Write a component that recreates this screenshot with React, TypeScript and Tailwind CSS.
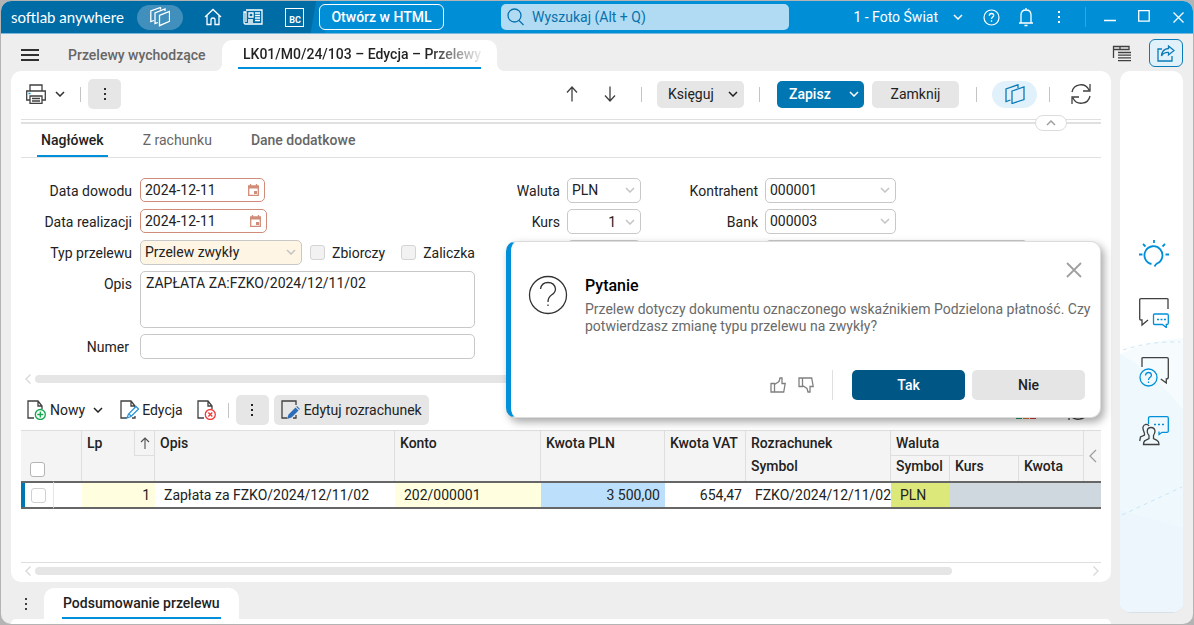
import { useState } from 'react'
import type { ReactNode } from 'react'
import clsx from 'clsx'

const ASIDE_LINE = '#404040'
const BLUE = '#0090d9'

function Icon({ w = 20, h = 20, className = '', children }: { w?: number; h?: number; className?: string; children: ReactNode }) {
  return (
    <svg
      width={w}
      height={h}
      viewBox={`0 0 ${w} ${h}`}
      fill="none"
      stroke="currentColor"
      strokeWidth="1.3"
      aria-hidden="true"
      className={clsx('shrink-0', className)}
    >
      {children}
    </svg>
  )
}

function Chevron({ className = '' }: { className?: string }) {
  return (
    <Icon w={10} h={6} className={className}>
      <path d="M1 1l4 4 4-4" strokeWidth="1.5" />
    </Icon>
  )
}

function Dots({ className = '' }: { className?: string }) {
  return (
    <Icon w={4} h={14} className={className}>
      <path d="M1 1h2v2H1zM1 6h2v2H1zM1 11h2v2H1z" fill="currentColor" stroke="none" />
    </Icon>
  )
}

function Refresh() {
  return (
    <Icon w={22} h={22} className="text-[#404040]">
      <path d="M2 9a9 9 0 0 1 17-2M20 1v7h-7M20 13a9 9 0 0 1-17 2M2 21v-7h7" />
    </Icon>
  )
}

function DocBase() {
  return <path d="M7 18H1V1h10l4 5v3M11 1v5h4" stroke="#404040" />
}

function Divider({ className = '' }: { className?: string }) {
  return <span className={clsx('h-[15px] w-px shrink-0 bg-[#c4c4c4]', className)} />
}

function TitleBar() {
  return (
    <header className="flex h-[33px] shrink-0 items-center border-b border-[#79b8dc] bg-[linear-gradient(100deg,#006ca6_0%,#006ca6_310px,#0080c4_311px,#0080c4_324px,#008fd7_325px)] pr-[9px] pl-[10px] text-white">
      <span className="w-[126px] font-[Lato,sans-serif] text-[15px] whitespace-nowrap">softlab anywhere</span>
      <button aria-label="Moduły" className="flex h-[25px] w-[46px] items-center justify-center rounded-full bg-[#418fbc]">
        <Icon w={20} h={20}>
          <path d="M9.5 8.3l10-4v10l-10 4.4zM8 15.5l-3 1V6l10-4v2M4 13.5l-3.2 1V4L10.500.5v2" />
        </Icon>
      </button>
      <button aria-label="Start" className="ml-[21px]">
        <Icon w={18} h={18}>
          <path d="M1 9l8-7.500L17 9M3 7.500V16.500h4v-5q0-1.500 2-1.500t2 1.500v5h4V7.500" />
        </Icon>
      </button>
      <button aria-label="Aktualności" className="ml-[21px]">
        <Icon w={20} h={16}>
          <path d="M3 1h16v14H2.500Q1 15 1 13V3h2v10M6 4h4v4H6zM12 4h5M12 6.500h5M12 9h5M5 11h5M12 11.500h5M5 13h5" />
        </Icon>
      </button>
      <button aria-label="BC" className="ml-[22px] flex h-[19px] w-[19px] items-end justify-end border border-white px-[2px] text-[9px] leading-[11px] font-bold">
        BC
      </button>
      <button className="ml-[15px] h-[26px] w-[125px] shrink-0 rounded-md border border-white bg-[#008fd7] text-sm font-medium whitespace-nowrap">
        Otwórz w HTML
      </button>
      <label className="ml-[57px] flex h-[26px] w-72 shrink-0 items-center gap-2 rounded-[5px] bg-[#b1dbf2] px-1.5 text-[#0672ae]">
        <Icon w={17} h={18}>
          <circle cx="7.500" cy="7.500" r="6.500" />
          <path d="M12 12.500l4.500 4.500" />
        </Icon>
        <input aria-label="Wyszukaj" placeholder="Wyszukaj (Alt + Q)" className="w-full bg-transparent text-sm outline-none placeholder:text-[#0672ae]" />
      </label>
      <div className="ml-auto flex items-center">
        <button className="flex items-center gap-[15px] text-sm whitespace-nowrap">
          1 - Foto Świat
          <Chevron />
        </button>
        <button aria-label="Pomoc" className="ml-5">
          <Icon w={17} h={17}>
            <circle cx="8.500" cy="8.500" r="7.500" strokeWidth="1.200" />
            <path d="M6.300 6.800q0-2.300 2.200-2.300t2.200 2c0 1.500-2.200 1.700-2.200 3.500M8.500 11.300v1.500" />
          </Icon>
        </button>
        <button aria-label="Powiadomienia" className="ml-[18px]">
          <Icon w={16} h={20}>
            <path d="M1 16h14M3 16V8q0-5 5-5t5 5v8M8 1v2M6.500 18.500h3" />
          </Icon>
        </button>
        <button aria-label="Więcej" className="ml-[23px]">
          <Dots />
        </button>
        <span className="ml-6 h-5 w-px bg-[#33a5df]" />
        <button aria-label="Minimalizuj" className="ml-[18px]">
          <Icon w={12} h={12}>
            <path d="M0 9.500h12" />
          </Icon>
        </button>
        <button aria-label="Maksymalizuj" className="ml-[22px]">
          <Icon w={12} h={12} className="-translate-y-px">
            <path d="M.7.7h10.500v10.500H.7z" />
          </Icon>
        </button>
        <button aria-label="Zamknij okno" className="ml-[23px]">
          <Icon w={11} h={11}>
            <path d="M.5.5l10 10M10.500.5l-10 10" />
          </Icon>
        </button>
      </div>
    </header>
  )
}

function TabRow() {
  return (
    <div className="flex h-[37px] shrink-0 items-end pl-5">
      <button aria-label="Menu" className="mb-2 text-[#303030]">
        <Icon w={18} h={16}>
          <path d="M0 3h18M0 8h18M0 13h18" strokeWidth="2" />
        </Icon>
      </button>
      <button className="mb-1.5 ml-[29px] w-[154px] text-left text-sm font-medium whitespace-nowrap text-[#666]">Przelewy wychodzące</button>
      <div className="relative h-[31px] w-[275px] rounded-t-[10px] bg-white px-4">
        <span className="absolute bottom-0 -left-2 h-2 w-2 bg-[radial-gradient(circle_at_0_0,#eee_8px,#fff_8px)]" />
        <span className="absolute -right-2 bottom-0 h-2 w-2 bg-[radial-gradient(circle_at_100%_0,#eee_8px,#fff_8px)]" />
        <button className="h-[29px] w-full border-b-2 border-[#0090d9] pl-[5px] text-left text-sm font-medium whitespace-nowrap text-[#222]">
          <span className="block bg-[linear-gradient(90deg,#222_78%,transparent_102%)] bg-clip-text text-transparent">
            LK01/M0/24/103 – Edycja – Przelewy
          </span>
        </button>
      </div>
      <div className="mr-[10px] ml-auto flex items-center gap-[17px] pb-1">
        <button aria-label="Lista okien" className="text-[#404040]">
          <Icon w={20} h={18}>
            <path d="M1.500 14V2M1 2.500h16v3H1M8 2.500v3M6 8.500h13M6 11.200h13M6 13.900h13M6 16.600h13" />
          </Icon>
        </button>
        <button aria-label="Udostępnij" className="flex h-7 w-[34px] items-center justify-center rounded-md border border-[#0a7bb8] bg-[#e1f1fa] text-[#0a7bb8]">
          <Icon w={18} h={17}>
            <path d="M5 4H1v12h14v-5M11.500 1l5.500 4.500-5.500 4.500V7.500Q7 7 4.500 11 5 4 11.500 3.500z" />
          </Icon>
        </button>
      </div>
    </div>
  )
}

function Toolbar() {
  return (
    <div className="relative shrink-0">
      <div className="flex h-[46px] items-center pr-[9px] pl-[5px]">
        <button aria-label="Drukuj" className="flex items-center gap-[9px] text-[#303030]">
          <Icon w={20} h={20} className="text-[#404040]">
            <path d="M4 7V1h12v6M4 16H.7V7h18.600v9H16M4 12h12v7.300H4zM6 14.500h8M6 17h8" />
            <path d="M2.500 9.500h2" stroke={BLUE} />
          </Icon>
          <Chevron />
        </button>
        <Divider className="ml-[15px]" />
        <button aria-label="Więcej opcji" className="ml-[7px] flex h-[30px] w-[33px] items-center justify-center rounded-[5px] bg-[#e6e6e6] text-[#303030]">
          <Dots />
        </button>
        <div className="ml-auto flex items-center">
          <button aria-label="Poprzedni" className="text-[#404040]">
            <Icon w={12} h={16}>
              <path d="M6 15.500V1M1 6.500L6 1l5 5.500" />
            </Icon>
          </button>
          <button aria-label="Następny" className="ml-[26px] text-[#404040]">
            <Icon w={12} h={16}>
              <path d="M6 .5V15M1 9.500L6 15l5-5.500" />
            </Icon>
          </button>
          <Divider className="ml-[25px]" />
          <button className="ml-[15px] flex h-[27px] w-[87px] items-center justify-between rounded-[5px] bg-[#e6e6e6] pr-1.5 pl-[11px] text-sm text-[#222]">
            Księguj
            <Chevron />
          </button>
          <Divider className="ml-[15px]" />
          <button className="ml-[17px] flex h-[27px] w-[87px] items-center justify-between rounded-[5px] bg-[#0077b3] pr-[5px] pl-3 text-sm font-medium text-white">
            Zapisz
            <Chevron />
          </button>
          <button className="ml-2 h-[27px] w-[87px] rounded-[5px] bg-[#e6e6e6] text-sm text-[#222]">Zamknij</button>
          <Divider className="ml-[17px]" />
          <button aria-label="Karty" className="ml-[15px] flex h-[27px] w-[45px] items-center justify-center rounded-full bg-[#e1f1fb] text-[#0a7bb8]">
            <Icon w={20} h={20}>
              <path d="M7 7l12-4v12.500l-12 4zM5.500 16L1 17.500V5L13 .8V4" />
            </Icon>
          </button>
          <Divider className="ml-3" />
          <button aria-label="Odśwież" className="ml-5">
            <Refresh />
          </button>
        </div>
      </div>
      <div className="mt-0.5 h-[5px] border-t border-b-2 border-[#e0e0e0]" />
      <button aria-label="Zwiń" className="absolute right-[34px] -bottom-[7px] z-10 flex h-4 w-8 items-center justify-center rounded-lg border border-[#dcdcdc] bg-white text-[#a0a0a0]">
        <Chevron className="rotate-180" />
      </button>
    </div>
  )
}

function SubTabs() {
  const tabs = ['Nagłówek', 'Z rachunku', 'Dane dodatkowe']
  const [active, setActive] = useState('Nagłówek')
  return (
    <div className="flex h-[34px] shrink-0 items-end gap-[31px] border-b border-[#e0e0e0] pl-4">
      {tabs.map((tab) => (
        <button
          key={tab}
          onClick={() => setActive(tab)}
          className={clsx(
            'h-[31px] border-b-2 px-1 pb-px text-sm whitespace-nowrap',
            tab === active ? 'border-[#0090d9] text-[#222]' : 'border-transparent text-[#666]',
            tab === 'Z rachunku' ? 'font-normal' : 'font-medium'
          )}
        >
          {tab}
        </button>
      ))}
    </div>
  )
}

function DateField({ id, className }: { id: string; className: string }) {
  return (
    <div className={clsx('flex h-6 items-center rounded-[5px] border border-[#d08c78] bg-white pr-[5px] pl-1', className)}>
      <input id={id} defaultValue="2024-12-11" className="w-full min-w-0 outline-none" />
      <Icon w={11} h={12} className="text-[#d08c78]">
        <path d="M.7 2h9.600v9.300H.7zM2.500 0v2M8.500 0v2" />
        <path d="M0 2h11v2.500H0zM6 7h3v3H6z" fill="currentColor" stroke="none" />
      </Icon>
    </div>
  )
}

function SelectField({ id, value, className }: { id: string; value: string; className: string }) {
  return (
    <div className={clsx('relative h-[25px] rounded-[5px] border border-[#c8c8c8]', className)}>
      <select id={id} defaultValue={value} className="h-full w-full appearance-none pr-5 pb-px pl-1 outline-none">
        <option>{value}</option>
      </select>
      <Chevron className="pointer-events-none absolute top-2 right-[5px] text-[#c4c4c4]" />
    </div>
  )
}

function TransferForm() {
  return (
    <form className="flex shrink-0 items-start pt-5 text-sm text-[#222]">
      <div className="grid grid-cols-[111px_335px] items-center gap-x-2 gap-y-1.5">
        <label htmlFor="data-dowodu" className="text-right">Data dowodu</label>
        <div className="h-[25px]">
          <DateField id="data-dowodu" className="w-[125px]" />
        </div>
        <label htmlFor="data-realizacji" className="text-right">Data realizacji</label>
        <div className="h-[25px]">
          <DateField id="data-realizacji" className="w-[127px]" />
        </div>
        <label htmlFor="typ" className="text-right">Typ przelewu</label>
        <div className="flex items-center">
          <SelectField id="typ" value="Przelew zwykły" className="w-[162px] bg-[#fff5e4]" />
          <label className="ml-2 flex items-center gap-[7px]">
            <input type="checkbox" className="h-[15px] w-[15px] appearance-none rounded-[3px] border border-[#d4d4d4] bg-[#f2f2f2]" />
            Zbiorczy
          </label>
          <label className="ml-4 flex items-center gap-[7px]">
            <input type="checkbox" className="h-[15px] w-[15px] appearance-none rounded-[3px] border border-[#d4d4d4] bg-[#f2f2f2]" />
            Zaliczka
          </label>
        </div>
        <label htmlFor="opis" className="self-start pt-[3px] text-right">Opis</label>
        <textarea
          id="opis"
          defaultValue="ZAPŁATA ZA:FZKO/2024/12/11/02"
          className="h-[57px] w-full resize-none rounded-[5px] border border-[#c8c8c8] px-[5px] pt-px outline-none"
        />
        <label htmlFor="numer" className="pr-[3px] text-right">Numer</label>
        <input id="numer" className="h-[25px] w-full rounded-[5px] border border-[#c8c8c8] px-1 outline-none" />
      </div>
      <div className="grid grid-cols-[85px_74px] items-center gap-x-[7px] gap-y-1.5">
        <label htmlFor="waluta" className="text-right">Waluta</label>
        <SelectField id="waluta" value="PLN" className="w-full" />
        <label htmlFor="kurs" className="text-right">Kurs</label>
        <div className="flex h-[25px] items-center rounded-[5px] border border-[#c8c8c8] pr-[5px]">
          <input id="kurs" defaultValue="1" className="w-full min-w-0 pr-[9px] text-right outline-none" />
          <Chevron className="text-[#c4c4c4]" />
        </div>
        <span />
        <input aria-label="Kwota" className="h-[25px] w-full rounded-[5px] border border-[#c8c8c8]" />
      </div>
      <div className="grid grid-cols-[117px_263px] items-center gap-x-[7px] gap-y-1.5">
        <label htmlFor="kontrahent" className="text-right">Kontrahent</label>
        <SelectField id="kontrahent" value="000001" className="w-[131px]" />
        <label htmlFor="bank" className="text-right">Bank</label>
        <SelectField id="bank" value="000003" className="w-[131px]" />
        <span />
        <input aria-label="Rachunek" className="h-[25px] w-full rounded-[5px] border border-[#c8c8c8]" />
      </div>
    </form>
  )
}

function ScrollBar({ className }: { className: string }) {
  return (
    <div className={clsx('flex h-2 shrink-0 items-center gap-1 pr-0.5 pl-1 text-[#d8d8d8]', className)}>
      <Icon w={6} h={10}>
        <path d="M5.500.5L1 5l4.500 4.500" />
      </Icon>
      <div className="h-full flex-1">
        <div className="h-full w-[87%] rounded-full bg-[#e5e5e5]" />
      </div>
      <Icon w={6} h={10}>
        <path d="M.5.5L5 5 .5 9.500" />
      </Icon>
    </div>
  )
}

function GridToolbar() {
  return (
    <div className="mt-3 flex h-[30px] shrink-0 items-center pr-3 pl-1.5 text-sm text-[#222]">
      <button className="flex items-center gap-1 whitespace-nowrap">
        <Icon w={19} h={20}>
          <DocBase />
          <circle cx="13.300" cy="14.500" r="5" fill="#fff" stroke="#10a84c" />
          <path d="M13.300 11.500v6M10.300 14.500h6" stroke="#10a84c" />
        </Icon>
        Nowy
        <Chevron className="ml-1" />
      </button>
      <button className="ml-[17px] flex items-center gap-[3px] whitespace-nowrap">
        <Icon w={19} h={20}>
          <DocBase />
          <path d="M12 18h3v-2" stroke="#404040" />
          <path d="M7 18l1.500-4 7.500-7.500 2.500 2.500-7.500 7.500zM9 14l2 2" fill="#fff" stroke="#2d94d8" />
        </Icon>
        Edycja
      </button>
      <button aria-label="Usuń" className="ml-[14px]">
        <Icon w={19} h={20}>
          <DocBase />
          <circle cx="13.300" cy="14.500" r="5" fill="#fff" stroke="#ee3a3a" />
          <path d="M11.300 12.500l4 4M15.300 12.500l-4 4" stroke="#ee3a3a" />
        </Icon>
      </button>
      <Divider className="ml-3" />
      <button aria-label="Więcej opcji listy" className="ml-[7px] flex h-[30px] w-[33px] items-center justify-center rounded-[5px] bg-[#e6e6e6]">
        <Dots />
      </button>
      <button className="ml-[5px] flex h-[30px] items-center gap-[3px] rounded-[5px] bg-[#e6e6e6] px-[7px] whitespace-nowrap">
        <Icon w={20} h={20}>
          <path d="M6 18H1V1h14v4M12 18h3v-3" stroke="#404040" />
          <path d="M6 19l1.500-4.500 7-7 3 3-7 7zM15.200 6.800L16 6l3 3-.8.8z" fill="#2a6cb8" stroke="none" />
        </Icon>
        Edytuj rozrachunek
      </button>
      <button aria-label="Wykres" className="ml-auto">
        <Icon w={22} h={20}>
          <path d="M1 9h6v10H1z" fill="#1d9a58" stroke="none" />
          <path d="M8 5h6v14H8z" fill="#e07b30" stroke="none" />
          <path d="M15 1h6v18h-6z" fill="#d83a3a" stroke="none" />
        </Icon>
      </button>
      <button aria-label="Odśwież listę" className="ml-[30px]">
        <Refresh />
      </button>
    </div>
  )
}

const TH = 'border-r border-[#dedede] px-[5px] text-left align-top font-medium whitespace-nowrap'
const TD = 'h-7 border-y-2 border-[#666] whitespace-nowrap overflow-hidden'

function SettlementTable() {
  return (
    <div className="mt-[5px] flex-1 border-b border-[#dedede]">
      <table className="w-full table-fixed border-separate border-spacing-0 text-sm leading-5 text-[#222]">
        <colgroup>
          <col className="w-[33px]" />
          <col className="w-[28px]" />
          <col className="w-[73px]" />
          <col />
          <col className="w-[146px]" />
          <col className="w-[124px]" />
          <col className="w-[81px]" />
          <col className="w-[145px]" />
          <col className="w-[59px]" />
          <col className="w-[69px]" />
          <col className="w-[65px]" />
          <col className="w-[17px]" />
        </colgroup>
        <thead className="bg-[#f4f4f4]">
          <tr className="h-[26px]">
            <th colSpan={2} rowSpan={2} className="border-t border-r border-[#dedede] pb-1 pl-[9px] text-left align-bottom">
              <input type="checkbox" aria-label="Zaznacz wszystkie" className="block h-[15px] w-[15px] appearance-none rounded-[3px] border border-[#b4b4b4] bg-white" />
            </th>
            <th rowSpan={2} className="border-t border-r border-[#dedede] text-left align-top font-medium">
              <div className="flex justify-between pl-[5px]">
                <span className="pt-0.5">Lp</span>
                <button aria-label="Sortuj" className="flex h-[25px] w-5 items-center justify-center border-b border-l border-[#dedede] text-[#505050]">
                  <Icon w={10} h={12}>
                    <path d="M5 12V1M1 5l4-4 4 4" strokeWidth="1.100" />
                  </Icon>
                </button>
              </div>
            </th>
            <th rowSpan={2} className={clsx(TH, 'border-t pt-0.5')}>Opis</th>
            <th rowSpan={2} className={clsx(TH, 'border-t pt-0.5')}>Konto</th>
            <th rowSpan={2} className={clsx(TH, 'border-t pt-0.5')}>Kwota PLN</th>
            <th rowSpan={2} className={clsx(TH, 'border-t pt-0.5')}>Kwota VAT</th>
            <th className={clsx(TH, 'border-t pt-0.5')}>Rozrachunek</th>
            <th colSpan={3} className={clsx(TH, 'border-t border-b pt-0.5')}>Waluta</th>
            <th rowSpan={2} className="border-t border-[#dedede]">
              <button aria-label="Zwiń kolumny" className="flex w-full justify-center text-[#a0a0a0]">
                <Icon w={8} h={14}>
                  <path d="M7 1L1 7l6 6" />
                </Icon>
              </button>
            </th>
          </tr>
          <tr className="h-[25px]">
            <th className={TH}>Symbol</th>
            <th className={TH}>Symbol</th>
            <th className={TH}>Kurs</th>
            <th className={TH}>Kwota</th>
          </tr>
        </thead>
        <tbody>
          <tr>
            <td className={clsx(TD, 'border-r border-r-[#e6e6e6] p-0')}>
              <div className="flex h-6 items-center border-l-4 border-[#0077b3] pl-1.5">
                <input type="checkbox" aria-label="Zaznacz wiersz 1" className="h-[15px] w-[15px] appearance-none rounded-[3px] border border-[#d0d0d0]" />
              </div>
            </td>
            <td className={TD} />
            <td className={clsx(TD, 'bg-[#ffffe0] pr-[5px] text-right')}>1</td>
            <td className={clsx(TD, 'pl-[9px]')}>Zapłata za FZKO/2024/12/11/02</td>
            <td className={clsx(TD, 'bg-[#ffffe0] pl-[9px]')}>202/000001</td>
            <td className={clsx(TD, 'bg-[#bcdffb] pr-[5px] text-right')}>3 500,00</td>
            <td className={clsx(TD, 'pr-1 text-right')}>654,47</td>
            <td className={clsx(TD, 'pl-[9px]')}>FZKO/2024/12/11/02</td>
            <td className={clsx(TD, 'bg-[#dde87a] pl-[9px]')}>PLN</td>
            <td className={clsx(TD, 'bg-[#d0d8df]')} />
            <td className={clsx(TD, 'bg-[#d0d8df]')} />
            <td className={clsx(TD, 'bg-[#d0d8df]')} />
          </tr>
        </tbody>
      </table>
    </div>
  )
}

function QuestionDialog() {
  return (
    <div
      role="dialog"
      aria-labelledby="pytanie"
      className="absolute top-[170px] right-[10px] z-20 w-[595px] rounded-[10px] border border-l-[5px] border-[#dcdcdc] border-l-[#0090d9] bg-white pt-[33px] pr-[15px] pb-[17px] pl-[17px] shadow-[3px_4px_9px_rgba(0,0,0,0.35)]"
    >
      <button aria-label="Zamknij okno dialogowe" className="absolute top-5 right-[18px] text-[#a0a0a0]">
        <Icon w={16} h={16}>
          <path d="M1 1l14 14M15 1L1 15" strokeWidth="1.800" />
        </Icon>
      </button>
      <div className="flex items-start gap-[17px]">
        <Icon w={40} h={40} className="text-[#333]">
          <circle cx="20" cy="20" r="18.500" />
          <path d="M12.500 14q1-6.500 7.500-6.500T27.500 14q0 3.500-4 6-3.500 2.500-3.500 7" />
          <path d="M20 29.500v1.500" />
        </Icon>
        <div className="-mr-3 pt-px">
          <h2 id="pytanie" className="text-base leading-5 font-medium text-black">Pytanie</h2>
          <p className="mt-[5px] text-sm leading-[17px] text-[#6a6a6a]">
            Przelew dotyczy dokumentu oznaczonego wskaźnikiem Podzielona płatność. Czy potwierdzasz zmianę typu przelewu na zwykły?
          </p>
        </div>
      </div>
      <div className="mt-[35px] flex items-center justify-end text-sm font-medium">
        <button aria-label="Pomocne" className="text-[#808080]">
          <Icon w={16} h={16}>
            <path d="M1 6.500h3.500v8.500H1zM4.500 7.500L9 4.500 10 1h2v5.500h3.200l-1.500 8.500h-9" />
          </Icon>
        </button>
        <button aria-label="Niepomocne" className="ml-3 text-[#808080]">
          <Icon w={16} h={16}>
            <path d="M1 1h3.500v8.500H1zM4.500 8.500L9 11.500l1 3.500h2V9.500h3.200L13.700 1h-9" />
          </Icon>
        </button>
        <span className="ml-[18px] h-[30px] w-px bg-[#e0e0e0]" />
        <button className="ml-[19px] h-[30px] w-[113px] rounded-[5px] bg-[#005685] text-white">Tak</button>
        <button className="ml-[7px] h-[30px] w-[113px] rounded-[5px] bg-[#e5e5e5] text-[#222]">Nie</button>
      </div>
    </div>
  )
}

function SidePanel() {
  return (
    <aside className="relative mr-[10px] mb-[11px] ml-[9px] flex w-[63px] shrink-0 flex-col items-center gap-[29px] overflow-hidden rounded-[10px] border-b border-[#d8e0e8] bg-white pt-[168px] pl-1">
      <svg className="absolute bottom-0 left-0 h-[274px] w-full" viewBox="0 0 63 274" preserveAspectRatio="none" aria-hidden="true">
        <path d="M0 16Q30 2 63 0v274H0z" fill="#f6fbfe" />
        <path d="M0 16Q34 34 63 72v202H0z" fill="#eff9fd" />
        <path d="M0 172L63 190v84H0z" fill="#edf5fd" />
        <path d="M3 12Q30 3 60 4M2 177L62 149" fill="none" stroke="#c8e6f6" strokeDasharray="4 4" />
      </svg>
      <button aria-label="Wskazówki" className="relative">
        <Icon w={30} h={30}>
          <path d="M12.500 25A9 9 0 1 1 18 24.500q-1.500 1-2.500 3M15 1v3M0 15.500h3.500M26.500 15.500H30M4 5l2.500 2.500M26 5l-2.500 2.500" stroke={BLUE} strokeWidth="1.800" />
        </Icon>
      </button>
      <button aria-label="Czat" className="relative">
        <Icon w={30} h={30}>
          <path d="M29 11V1Q29 .7 28 .7H2Q.7.7.7 2v19Q.7 22 2 22h1v5l6-5" stroke={ASIDE_LINE} />
          <path d="M15.500 16h12.500q1.300 0 1.300 1.300v8q0 1.200-2 1.200v3l-4-3h-7.800q-1 0-1-1v-8.500q0-1 1-1z" stroke={BLUE} />
          <path d="M18 21.500h2M21.500 21.500h2M25 21.500h2" stroke={BLUE} />
        </Icon>
      </button>
      <button aria-label="Pytania" className="relative">
        <Icon w={30} h={30}>
          <path d="M3 10V1Q3 .7 4 .7h24q1.300 0 1.300 1.300v18q0 2-2 2v4l-5.500-4" stroke={ASIDE_LINE} />
          <circle cx="9.500" cy="20.500" r="8.500" stroke={BLUE} />
          <path d="M6.500 18.500q.3-3 3-3t3 2.800c0 2-3 2.200-3 4.700M9.500 24.500V26" stroke={BLUE} />
        </Icon>
      </button>
      <button aria-label="Konsultanci" className="relative">
        <Icon w={30} h={30}>
          <path d="M9.500 8V2Q9.500.7 11 .7h17q1.300 0 1.300 1.300v13q0 1.300-1.300 1.300h-5L20 18.500v-3" stroke={BLUE} />
          <path d="M15 8.500h2M19 8.500h2M23 8.500h2" stroke={BLUE} />
          <path d="M10 10Q9 8 6.500 8.500 3.500 9.500 4 13l1.500 4.500v1.500L1.500 21 .7 25M9 18q-1-2-.7-3Q8.500 11.500 12 11.500T16 15q0 2-1.500 4.500v3l3.500 1.800q2 1 2 4.200H4.500q0-3.500 2-4.200L10 22.500V19.500z" stroke={ASIDE_LINE} />
        </Icon>
      </button>
    </aside>
  )
}

export default function App() {
  return (
    <div className="h-screen min-h-[600px] bg-[#b4b4b4] p-px font-[Roboto,sans-serif]">
      <div className="flex h-full flex-col overflow-hidden rounded-[10px] bg-[#eee]">
        <TitleBar />
        <TabRow />
        <div className="flex min-h-0 flex-1">
          <div className="flex min-w-0 flex-1 flex-col pl-[10px]">
            <main className="relative flex min-h-0 flex-1 flex-col rounded-[10px] bg-white pr-[10px] pl-[10px]">
              <Toolbar />
              <SubTabs />
              <TransferForm />
              <ScrollBar className="mt-4" />
              <GridToolbar />
              <SettlementTable />
              <ScrollBar className="mt-1 mb-[7px]" />
              <QuestionDialog />
            </main>
            <div className="mt-1.5 flex h-[31px] shrink-0 items-center">
              <button aria-label="Opcje podsumowania" className="ml-[13px] text-[#404040]">
                <Dots />
              </button>
              <div className="ml-4 h-full rounded-t-[10px] bg-white px-[18px]">
                <button className="h-full border-b-2 border-[#0090d9] px-px text-sm font-medium text-[#222]">Podsumowanie przelewu</button>
              </div>
            </div>
            <div className="h-[5px] shrink-0 rounded-t-[10px] bg-white" />
          </div>
          <SidePanel />
        </div>
      </div>
    </div>
  )
}
